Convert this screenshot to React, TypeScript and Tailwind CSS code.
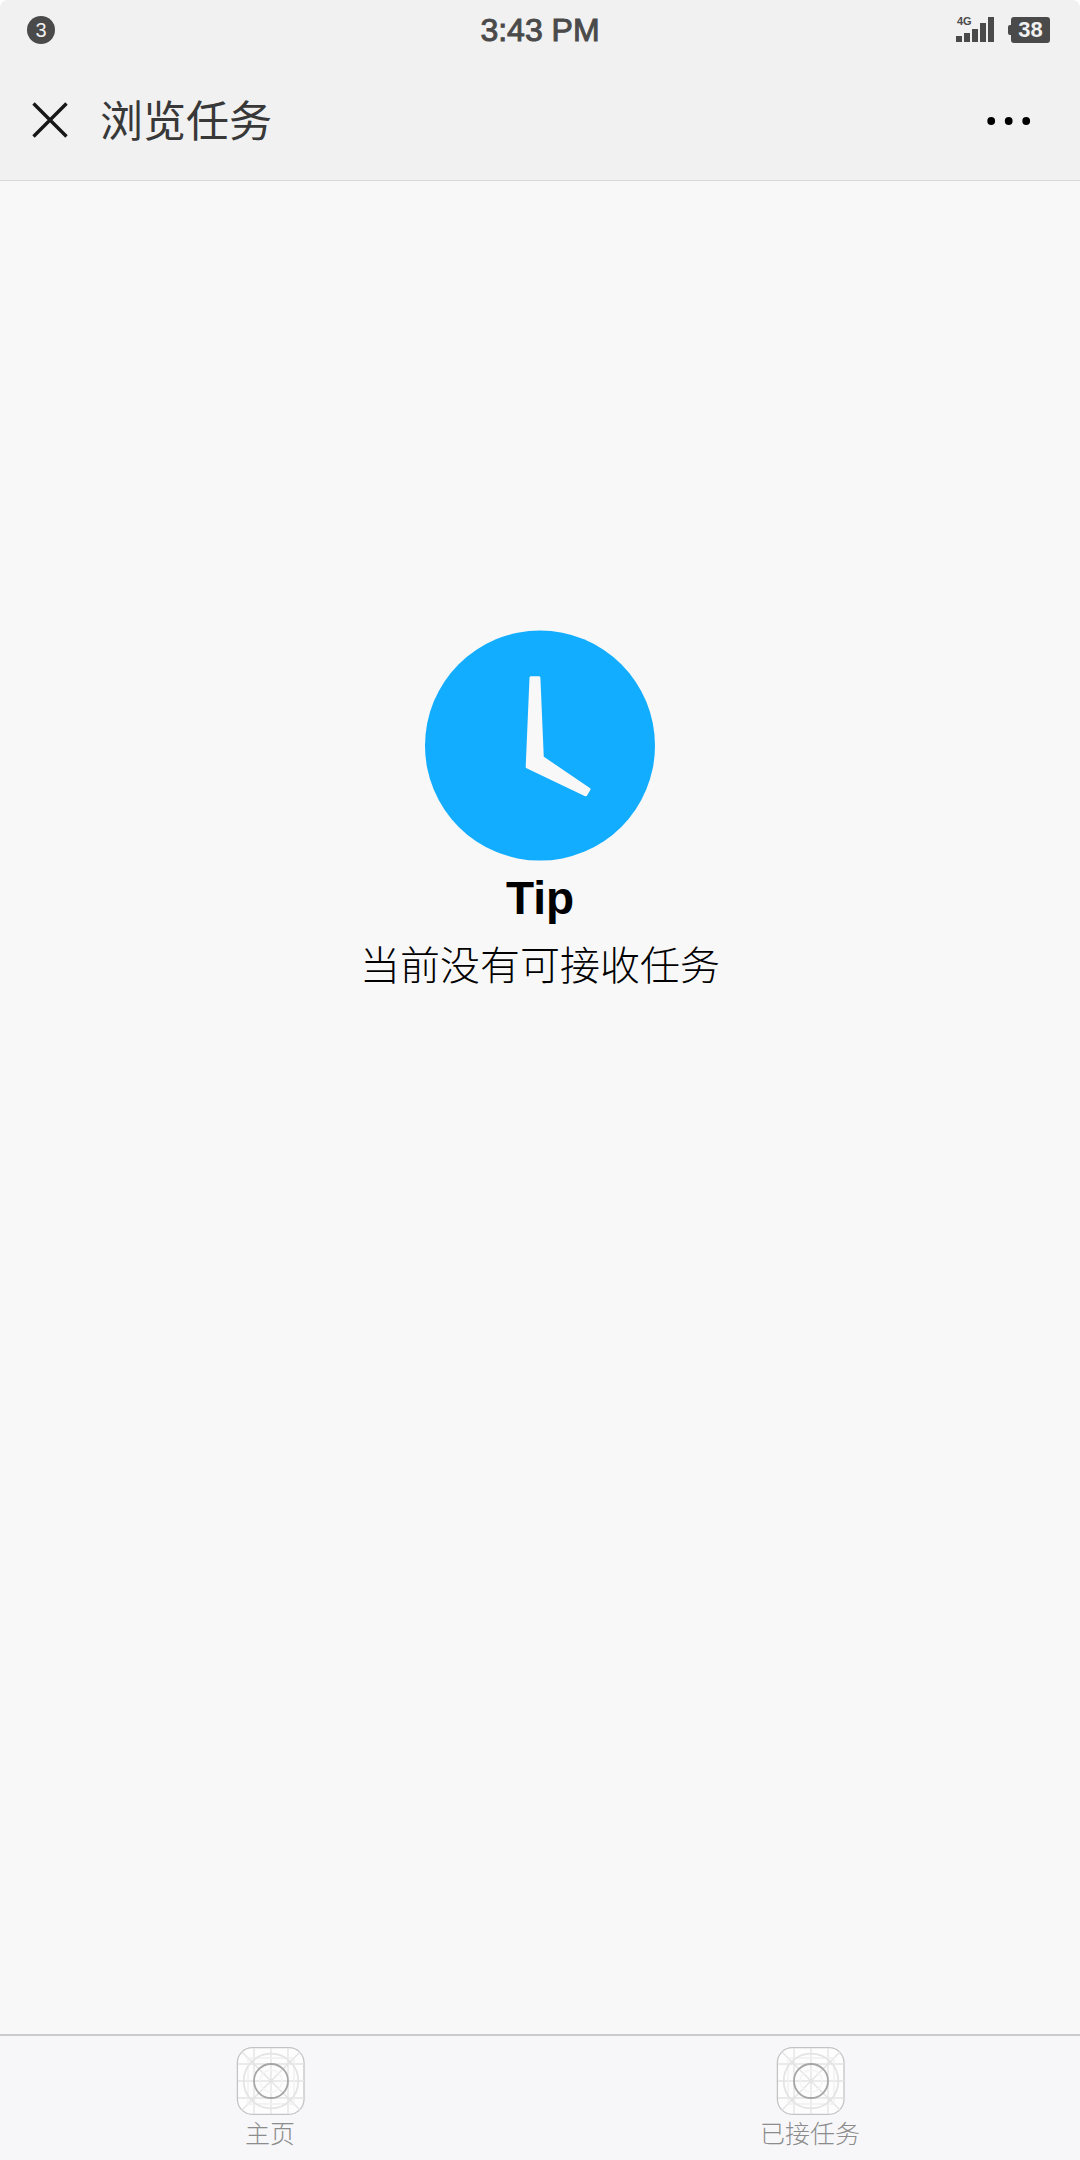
import React from "react";

function TemplateIcon() {
  return (
    <svg viewBox="0 0 70 68" className="h-[68px] w-[70px]" fill="none" aria-hidden="true">
      <rect x="2.4" y="0.7" width="66.6" height="66.6" rx="15" fill="#fdfdfe" stroke="#c4c4c5" strokeWidth="1.3" />
      <g stroke="#e4e4e5" strokeWidth="1.4">
        <path d="M7 5 65 63M65 5 7 63M36 1V67M3 34H69M19 1V67M53 1V67M3 17H69M3 51H69" />
        <path d="M13 11H59V57H13Z" stroke="#f0f0f0" />
        <circle cx="36" cy="34" r="27.3" strokeWidth="1.8" />
        <circle cx="36" cy="34" r="11" stroke="#f4f4f4" />
      </g>
      <circle cx="36" cy="34" r="17" stroke="#a6a6a6" strokeWidth="1.8" />
    </svg>
  );
}

function StatusBar() {
  return (
    <div className="grid h-15 grid-cols-3 items-center px-[27px] text-[#4a4a4a]">
      <span className="flex h-7 w-7 items-center justify-center rounded-full bg-[#4a4a4a] text-[20px] leading-7 text-[#f1f1f1]">
        3
      </span>
      <time className="text-center text-[32px] leading-[60px] [-webkit-text-stroke:1px_#4a4a4a]">3:43 PM</time>
      <div className="flex items-center justify-end gap-[14px] pr-[3px]">
        <svg viewBox="0 -4 38 34" className="h-[34px] w-[38px]" fill="#4a4a4a" role="img" aria-label="4G signal">
          <path d="M0 19h6v6H0zM8 16h6v9H8zM16 12h6v13h-6zM24 6h6v19h-6zM32 0h6v25h-6z" />
          <text x="1" y="8" fontSize="11" fontWeight="700">
            4G
          </text>
        </svg>
        <div className="flex items-center">
          <span className="h-[10px] w-[3px] rounded-l-xs bg-[#4a4a4a]" />
          <span className="flex h-[26px] w-[39px] items-center justify-center rounded-[3px] bg-[#4a4a4a] text-[22px] leading-[26px] font-bold text-[#f1f1f1]">
            38
          </span>
        </div>
      </div>
    </div>
  );
}

function Header() {
  return (
    <header className="rounded-t-lg border-b border-[#d9d9d9] bg-[#f1f1f1]">
      <StatusBar />
      <div className="flex h-30 items-center pr-[49px] pl-8">
        <button type="button" aria-label="关闭" className="mr-8">
          <svg viewBox="0 0 36 36" className="h-9 w-9" stroke="#171717" strokeWidth="3.4" aria-hidden="true">
            <path d="M1.5 1.5 34.5 34.5M34.5 1.5 1.5 34.5" />
          </svg>
        </button>
        <h1 className="pt-[3px] text-[43px] leading-[60px] text-[#383838]">浏览任务</h1>
        <button type="button" aria-label="更多" className="ml-auto pt-[2px]">
          <svg viewBox="0 0 44 10" className="h-[10px] w-[44px]" aria-hidden="true">
            <circle cx="4.2" cy="5" r="3.9" />
            <circle cx="21.7" cy="5" r="3.9" />
            <circle cx="39.2" cy="5" r="3.9" />
          </svg>
        </button>
      </div>
    </header>
  );
}

function EmptyState() {
  return (
    <main className="flex flex-1 flex-col items-center pt-[449px] text-black">
      <svg viewBox="0 0 232 232" className="h-[232px] w-[232px]" aria-hidden="true">
        <circle cx="116" cy="115.6" r="115" fill="#12adff" />
        <path
          d="M107 47.8 114.9 47.8 118.3 127.5 165 159.3 161.8 164.8 103.2 137Z"
          fill="#f8f8f8"
          stroke="#f8f8f8"
          strokeWidth="3"
          strokeLinejoin="round"
        />
      </svg>
      <h2 className="mt-1.5 text-[46px] leading-[60px] font-bold">Tip</h2>
      <p className="mt-2 text-[40px] leading-[60px] font-light">当前没有可接收任务</p>
    </main>
  );
}

const tabs = ["主页", "已接任务"];

function TabBar() {
  return (
    <nav className="grid grid-cols-2 border-t-2 border-[#cbcbcf] bg-[#f7f7fa]">
      {tabs.map((label) => (
        <a key={label} href="#" className="flex h-[124px] flex-col items-center gap-1 pt-[11px] text-[#8c8c8c]">
          <TemplateIcon />
          <span className="text-[25px] leading-[30px] font-light">{label}</span>
        </a>
      ))}
    </nav>
  );
}

export default function App() {
  return (
    <div className="bg-white">
      <div className="flex min-h-screen flex-col rounded-t-lg bg-[#f8f8f8] font-['Liberation_Sans','Noto_Sans_CJK_SC',sans-serif]">
        <Header />
        <EmptyState />
        <TabBar />
      </div>
    </div>
  );
}
